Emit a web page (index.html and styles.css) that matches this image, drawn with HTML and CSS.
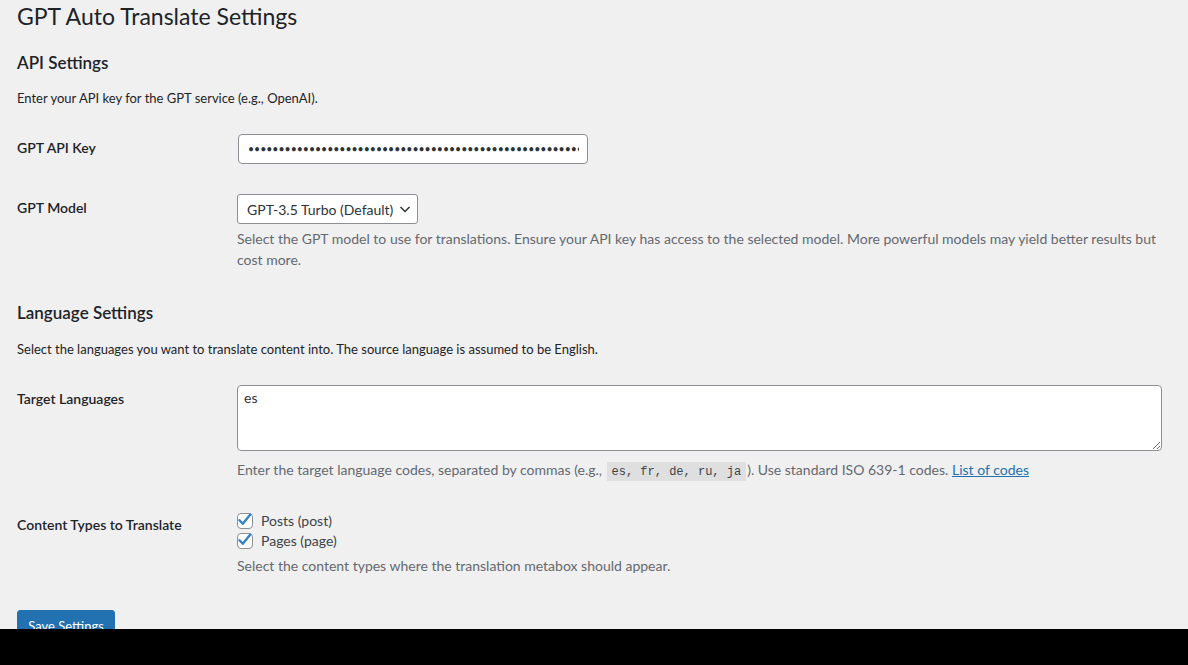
FILE: index.html
```html
<!DOCTYPE html>
<html lang="en">
<head>
<meta charset="utf-8">
<title>GPT Auto Translate Settings</title>
<link rel="stylesheet" href="styles.css">
</head>
<body>
<div class="wrap">
  <h1 class="page-title">GPT Auto Translate Settings</h1>
  <form class="settings-form">
    <h2 class="section-title">API Settings</h2>
    <p class="section-intro">Enter your API key for the GPT service (e.g., OpenAI).</p>
    <table class="form-table">
      <tr>
        <th><label for="key">GPT API Key</label></th>
        <td><input id="key" class="regular-text" type="password" value="sk-abcdefghijklmnopqrstuvwxyz0123456789ABCDEFGHIJKLMNOPQRSTUVWXYZabcdefghijklmnop"></td>
      </tr>
      <tr>
        <th><label for="model">GPT Model</label></th>
        <td>
          <span class="select-wrap">
            <select id="model" class="select"><option>GPT-3.5 Turbo (Default)</option></select>
            <svg class="chev" width="16" height="16" viewBox="0 0 16 16"><path d="M3.5 6l4.5 4.5L12.5 6" fill="none" stroke="#2c3338" stroke-width="1.5"/></svg>
          </span>
          <p class="description">Select the GPT model to use for translations. Ensure your API key has access to the selected model. More powerful models may yield better results but cost more.</p>
        </td>
      </tr>
    </table>

    <h2 class="section-title">Language Settings</h2>
    <p class="section-intro">Select the languages you want to translate content into. The source language is assumed to be English.</p>
    <table class="form-table">
      <tr>
        <th><label for="langs">Target Languages</label></th>
        <td>
          <textarea id="langs" class="large-text">es</textarea>
          <p class="description description-code">Enter the target language codes, separated by commas (e.g., <code>es, fr, de, ru, ja</code>). Use standard ISO 639-1 codes. <a href="#">List of codes</a></p>
        </td>
      </tr>
      <tr>
        <th>Content Types to Translate</th>
        <td>
          <div class="checks">
            <label class="check-row"><span class="cb"><svg width="20" height="20" viewBox="0 0 20 20"><path d="M4.5 10.2l3.3 3.6L15.3 4.6" fill="none" stroke="#3582c4" stroke-width="2.4" stroke-linecap="round" stroke-linejoin="round"/></svg></span>Posts (post)</label>
            <label class="check-row"><span class="cb"><svg width="20" height="20" viewBox="0 0 20 20"><path d="M4.5 10.2l3.3 3.6L15.3 4.6" fill="none" stroke="#3582c4" stroke-width="2.4" stroke-linecap="round" stroke-linejoin="round"/></svg></span>Pages (page)</label>
          </div>
          <p class="description">Select the content types where the translation metabox should appear.</p>
        </td>
      </tr>
    </table>
    <p class="submit"><button type="button" class="button-primary">Save Settings</button></p>
  </form>
</div>
<div class="bottom-bar"></div>
</body>
</html>
```
FILE: styles.css
```css
html, body {
  margin: 0;
  padding: 0;
}
body {
  background: #f0f0f1;
  color: #1d2327;
  font-family: "Segoe UI", Lato, "Noto Sans", sans-serif;
  font-size: 13px;
  line-height: 1.4em;
  overflow: hidden;
  height: 665px;
}
.wrap {
  padding: 0 16px 0 17px;
}
.page-title {
  font-size: 23px;
  font-weight: 400;
  line-height: 1.3;
  margin: 0;
  padding: 2px 0 3px;
}
.section-title {
  font-size: 17px;
  font-weight: 600;
  line-height: 1.3;
  margin: 17px 0 15px;
}
.section-intro {
  font-size: 13px;
  line-height: 1.5;
  margin: 13px 0 11px;
}
.form-table {
  border-collapse: collapse;
  width: 100%;
  margin-top: 6px;
}
.form-table th {
  width: 200px;
  padding: 20px 10px 20px 0;
  text-align: left;
  vertical-align: top;
  font-size: 14px;
  font-weight: 600;
  line-height: 1.3;
  color: #1d2327;
}
.form-table td {
  padding: 15px 10px;
  vertical-align: middle;
  font-size: 14px;
  line-height: 1.3;
}
.regular-text {
  box-sizing: border-box;
  width: 350px;
  height: 30px;
  border: 1px solid #8c8f94;
  border-radius: 4px;
  background: #fff;
  padding: 0 8px 0 9px;
  font-family: inherit;
  font-size: 10.5px;
  color: #2c3338;
  letter-spacing: 0;
  display: block;
  margin-left: 1px;
}
.select-wrap {
  position: relative;
  display: inline-block;
}
.select {
  -webkit-appearance: none;
  appearance: none;
  box-sizing: border-box;
  height: 30px;
  width: 181px;
  border: 1px solid #8c8f94;
  border-radius: 3px;
  background: #fff;
  padding: 0 24px 0 9px;
  font-family: inherit;
  font-size: 14px;
  color: #2c3338;
  display: block;
}
.chev {
  position: absolute;
  right: 5px;
  top: 7px;
  pointer-events: none;
}
.description {
  margin: 4px 0 0;
  font-size: 14px;
  line-height: 1.5;
  color: #646970;
}
.description-code {
  margin-top: 8px;
}
.large-text {
  box-sizing: border-box;
  display: block;
  width: 100%;
  height: 66px;
  border: 1px solid #8c8f94;
  border-radius: 4px;
  background: #fff;
  padding: 2px 6px;
  font-family: inherit;
  font-size: 14px;
  line-height: 1.42857;
  color: #2c3338;
  resize: vertical;
}
code {
  font-family: "Liberation Mono", "DejaVu Sans Mono", monospace;
  font-size: 12px;
  background: rgba(0, 0, 0, 0.07);
  padding: 3px 5px 2px;
  margin: 0 1px;
  color: #3c434a;
}
.description a {
  color: #2271b1;
  text-decoration: underline;
}
.checks {
  display: flex;
  flex-direction: column;
}
.check-row {
  display: flex;
  align-items: center;
  gap: 8px;
  line-height: 20px;
  color: #3c434a;
}
.cb {
  position: relative;
  box-sizing: border-box;
  width: 16px;
  height: 16px;
  border: 1px solid #8c8f94;
  border-radius: 4px;
  background: #fff;
  flex: none;
}
.cb svg {
  position: absolute;
  left: -3px;
  top: -4px;
}
.submit {
  margin: 0;
  padding: 19px 0 0;
}
.button-primary {
  background: #2271b1;
  border: 1px solid #2271b1;
  color: #fff;
  border-radius: 3px;
  font-family: inherit;
  font-size: 13px;
  height: 32px;
  padding: 0 10px;
  width: 98px;
  box-sizing: border-box;
}
.bottom-bar {
  position: fixed;
  left: 0;
  right: 0;
  bottom: 0;
  height: 36px;
  background: #000;
}
```
